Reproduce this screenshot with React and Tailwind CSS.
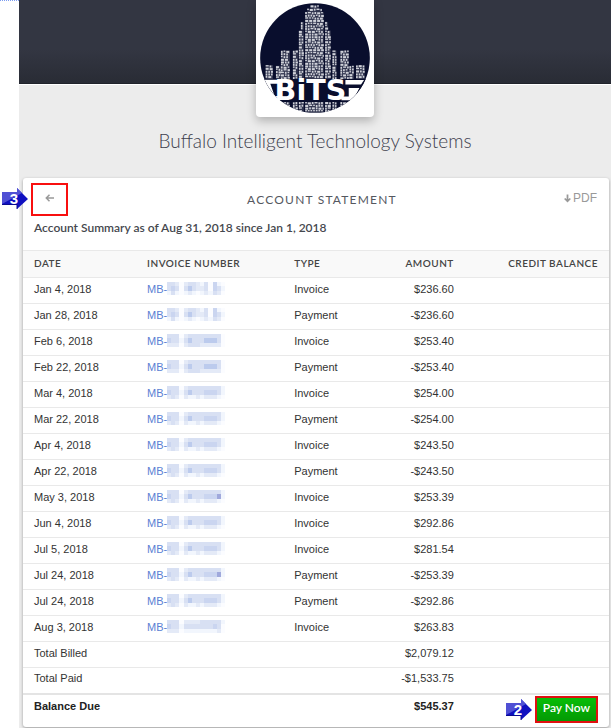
import React from 'react';
import clsx from 'clsx';

const transactions = [
  { date: 'Jan 4, 2018', type: 'Invoice', amount: '$236.60', mask: 0 },
  { date: 'Jan 28, 2018', type: 'Payment', amount: '-$236.60', mask: 0 },
  { date: 'Feb 6, 2018', type: 'Invoice', amount: '$253.40', mask: 1 },
  { date: 'Feb 22, 2018', type: 'Payment', amount: '-$253.40', mask: 1 },
  { date: 'Mar 4, 2018', type: 'Invoice', amount: '$254.00', mask: 2 },
  { date: 'Mar 22, 2018', type: 'Payment', amount: '-$254.00', mask: 2 },
  { date: 'Apr 4, 2018', type: 'Invoice', amount: '$243.50', mask: 2 },
  { date: 'Apr 22, 2018', type: 'Payment', amount: '-$243.50', mask: 2 },
  { date: 'May 3, 2018', type: 'Invoice', amount: '$253.39', mask: 3 },
  { date: 'Jun 4, 2018', type: 'Invoice', amount: '$292.86', mask: 2 },
  { date: 'Jul 5, 2018', type: 'Invoice', amount: '$281.54', mask: 2 },
  { date: 'Jul 24, 2018', type: 'Payment', amount: '-$253.39', mask: 3 },
  { date: 'Jul 24, 2018', type: 'Payment', amount: '-$292.86', mask: 2 },
  { date: 'Aug 3, 2018', type: 'Invoice', amount: '$263.83', mask: 4 },
];

// each digit is the shade of one mosaic cell
const masks = [
  ['33202332130410', '34303532230431', '13101210121320'],
  ['33302333333330', '43313533355530', '22202333222220'],
  ['33302333333331', '43313533344431', '23202112122210'],
  ['33302333333331', '43313533344461', '23202112122210'],
  ['33302222333331', '43313333333430', '22201111111120'],
];

const shades = ['#fbfcff', '#f2f6fd', '#e4eaf7', '#d8e0f3', '#cad5f0', '#bccbed', '#a0a9dc'];

const headStyle = 'border-t border-[#e9e9e9] px-[11px] pb-[2px] font-semibold';
const cellStyle = 'border-t border-[#e9e9e9] px-[11px] pb-1';
const totalStyle = 'border-t-2 border-[#e4e4e4] px-[11px]';

function MaskedNumber({ pattern }) {
  return (
    <svg width="58" height="13" viewBox="0 0 14 3" preserveAspectRatio="none" shapeRendering="crispEdges" aria-hidden="true">
      {masks[pattern].map((line, y) =>
        line.split('').map((shade, x) => (
          <rect key={`${x}-${y}`} x={x} y={y} width="1" height="1" fill={shades[shade]} />
        ))
      )}
    </svg>
  );
}

// x, top, width and bottom of each block of windows
const blocks = [
  [48, 196, 22, 238],
  [79, 198, 15, 238],
  [94, 152, 27, 238],
  [130, 152, 15, 238],
  [148, 92, 15, 238],
  [154, 66, 9, 90],
  [167, 36, 56, 238],
  [173, 26, 44, 36],
  [183, 16, 25, 26],
  [227, 92, 17, 238],
  [227, 66, 9, 90],
  [249, 152, 12, 238],
  [273, 152, 25, 238],
  [300, 198, 14, 238],
  [320, 196, 26, 238],
  [92, 307, 29, 340],
  [130, 307, 15, 340],
  [148, 307, 15, 340],
  [167, 307, 56, 340],
  [227, 307, 17, 340],
  [249, 307, 12, 340],
  [273, 307, 25, 340],
];

function Windows() {
  const bars = [];
  blocks.forEach(([x, top, width, bottom], b) => {
    bars.push(<rect key={b} x={x} y={top} width={width} height={bottom - top} opacity="0.2" />);
    for (let y = top, row = 0; y + 5 < bottom; y += 8, row += 1) {
      for (let dx = 0, col = 0; dx < width - 3; col += 1) {
        const seed = (b * 31 + row * 17 + col * 23 + row * col * 7) % 11;
        const w = Math.min(seed % 3 === 0 ? 9 : 5, width - dx);
        bars.push(
          <rect key={`${b}-${row}-${col}`} x={x + dx} y={y + (seed % 2)} width={w} height={seed % 4 === 0 ? 4 : 6} />
        );
        dx += w + 3;
      }
    }
  });
  return <g fill="#d0d2d9">{bars}</g>;
}

function Logo() {
  return (
    <svg viewBox="31 9 331 331" className="block w-full" role="img" aria-label="BiTS">
      <clipPath id="disc">
        <circle cx="196.500" cy="174.500" r="165" />
      </clipPath>
      <circle cx="196.500" cy="174.500" r="165" fill="#090e2d" />
      <g clipPath="url(#disc)">
        <Windows />
        <path d="M30 238h335v68H30z" fill="#090e2d" />
        <path d="M44 240h46v12H62l13 37h12v13H66L30 250z" fill="#fff" />
        <path d="M288 241h56l-9 13h-47zM298 265h32l-19 37h-35v-12h22z" fill="#fff" />
      </g>
      <text
        x="75"
        y="302"
        fill="#fff"
        fontFamily="DejaVu Sans, sans-serif"
        fontWeight="700"
        fontSize="86"
      >
        BiTS
      </text>
    </svg>
  );
}

function StepMarker({ number }) {
  return (
    <svg width="28" height="23" viewBox="0 0 28 23" aria-hidden="true">
      <path d="M1 5h15V1l11 11-11 10v-4H1z" fill="#1010c0" />
      <path d="M1 5h15V1l5 5L1 17z" fill="#5050d4" />
      <path d="M1 17.500h15V22" fill="none" stroke="#0a0a90" />
      <text x="13" y="17" textAnchor="middle" fill="#fff" fontFamily="Liberation Sans, sans-serif" fontWeight="700" fontSize="15">
        {number}
      </text>
    </svg>
  );
}

function SummaryRow({ label, amount }) {
  return (
    <tr className="h-[26px]">
      <th scope="row" colSpan={3} className={clsx(cellStyle, 'text-left font-normal')}>{label}</th>
      <td className={clsx(cellStyle, 'text-right')}>{amount}</td>
      <td className={cellStyle} />
    </tr>
  );
}

export default function App() {
  return (
    <div className="relative bg-white pl-[19px] font-['Liberation_Sans',sans-serif]">
      <div className="absolute left-0 top-0 w-[19px] border-t border-dotted border-[#7c9cf0]" />
      <div className="bg-[#ececec] pb-px">
        <header className="h-[84px] border-b border-[#20232b] bg-linear-to-b from-[#333642] from-60% to-[#292c35]">
          <div className="relative mx-auto w-[118px] rounded-b-sm bg-white px-1 pb-1 pt-[3px] shadow-[0_4px_10px_rgba(0,0,0,0.25)]">
            <Logo />
          </div>
        </header>

        <h1 className="border-t border-white pb-6 pt-[43px] text-center font-['Lato',sans-serif] text-[19px] font-light leading-[26px] text-[#3c404c]">
          Buffalo Intelligent Technology Systems
        </h1>

        <main className="ml-1 mr-[2px] rounded-[3px] bg-white shadow-[0_1px_3px_rgba(0,0,0,0.35)]">
          <div className="grid grid-cols-[auto_1fr_auto] items-start pl-2 pr-3 pt-[5px]">
            <div className="relative">
              <button type="button" aria-label="Back" className="flex h-[33px] w-[37px] items-center justify-center border-2 border-[#f80f0f] pb-1">
                <svg width="9" height="8" viewBox="0 0 9 8" fill="none" stroke="#999" strokeWidth="1.500" aria-hidden="true">
                  <path d="M9 4H1M4.500 .8L1.300 4l3.200 3.200" />
                </svg>
              </button>
              <div className="absolute right-full top-1 mr-[2px]">
                <StepMarker number="3" />
              </div>
            </div>
            <h2 className="pl-3 pt-2 text-center font-['Lato',sans-serif] text-[12px] leading-[18px] tracking-widest text-[#55585f]">
              ACCOUNT STATEMENT
            </h2>
            <a href="#pdf" className="flex items-center gap-[2px] pt-[6px] text-[12px] leading-[18px] text-[#999]">
              <svg width="7" height="9" viewBox="0 0 8 9" fill="none" stroke="currentColor" strokeWidth="2" aria-hidden="true">
                <path d="M4 0v8M.8 4.500L4 7.700l3.200-3.200" />
              </svg>
              PDF
            </a>
          </div>
          <p className="px-[11px] pb-[14px] pt-[3px] font-['Lato',sans-serif] text-[12px] font-semibold leading-[17px] text-[#45484e]">
            Account Summary as of Aug 31, 2018 since Jan 1, 2018
          </p>

          <table className="w-full table-fixed text-[11px] leading-[18px] text-[#333]">
            <thead>
              <tr className="h-[27px] bg-[#f9f9f9] font-['Lato',sans-serif] text-[10px] tracking-wider text-[#444]">
                <th className={clsx(headStyle, 'w-[19.3%] text-left')}>DATE</th>
                <th className={clsx(headStyle, 'w-[25.1%] text-left')}>INVOICE NUMBER</th>
                <th className={clsx(headStyle, 'w-[14%] text-left')}>TYPE</th>
                <th className={clsx(headStyle, 'w-[17%] text-right')}>AMOUNT</th>
                <th className={clsx(headStyle, 'text-right')}>CREDIT BALANCE</th>
              </tr>
            </thead>
            <tbody>
              {transactions.map((t, i) => (
                <tr key={i} className="h-[26px]">
                  <td className={cellStyle}>{t.date}</td>
                  <td className={cellStyle}>
                    <a href="#invoice" className="flex items-center text-[#5b7fd3]">
                      MB-
                      <MaskedNumber pattern={t.mask} />
                    </a>
                  </td>
                  <td className={cellStyle}>{t.type}</td>
                  <td className={clsx(cellStyle, 'text-right')}>{t.amount}</td>
                  <td className={cellStyle} />
                </tr>
              ))}
              <SummaryRow label="Total Billed" amount="$2,079.12" />
              <SummaryRow label="Total Paid" amount="-$1,533.75" />
              <tr className="align-top font-bold text-[#222]">
                <th scope="row" colSpan={3} className={clsx(totalStyle, 'pt-[2px] text-left')}>Balance Due</th>
                <td className={clsx(totalStyle, 'pt-[2px] text-right')}>$545.37</td>
                <td className={clsx(totalStyle, 'pb-1 pt-px')}>
                  <div className="flex items-center justify-end gap-[2px]">
                    <StepMarker number="2" />
                    <button
                      type="button"
                      className="h-[27px] w-[63px] border-2 border-[#e01010] bg-linear-to-b from-[#08bd08] to-[#049a04] pb-[2px] font-['Lato',sans-serif] text-[12px] font-semibold text-white"
                    >
                      Pay Now
                    </button>
                  </div>
                </td>
              </tr>
            </tbody>
          </table>
        </main>
      </div>
    </div>
  );
}
